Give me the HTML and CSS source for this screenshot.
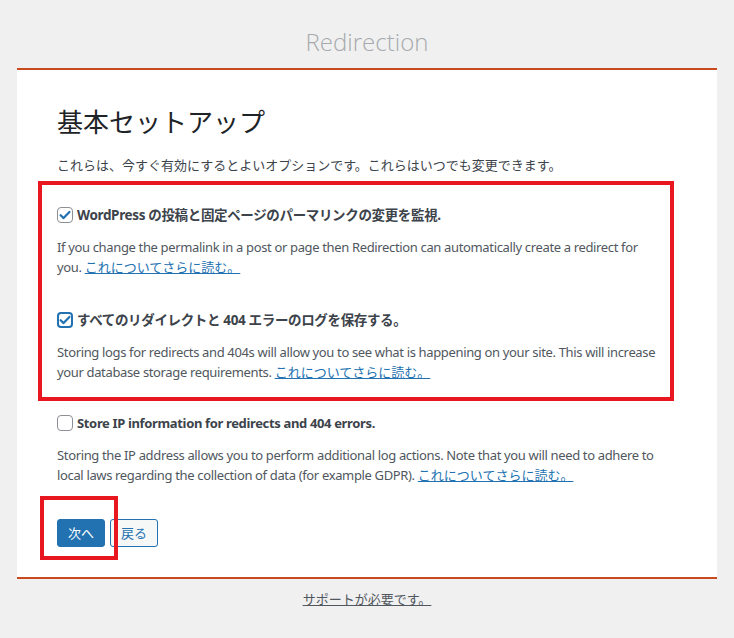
FILE: index.html
```html
<!DOCTYPE html>
<html lang="ja">
<head>
<meta charset="utf-8">
<title>Redirection</title>
<link rel="stylesheet" href="styles.css">
</head>
<body>
<h1 class="app-title">Redirection</h1>
<div class="card">
  <h2 class="setup-title">基本セットアップ</h2>
  <p class="intro">これらは、今すぐ有効にするとよいオプションです。これらはいつでも変更できます。</p>

  <div class="highlight">
    <div class="option">
      <label class="option-label">
        <span class="checkbox checked">
          <svg viewBox="0 0 16 16" width="16" height="16"><path d="M3.6 8.2l3 2.9 5.8-6.2" fill="none" stroke="#2271b1" stroke-width="2.2" stroke-linecap="round" stroke-linejoin="round"/></svg>
        </span>
        <span class="label-text">WordPress の投稿と固定ページのパーマリンクの変更を監視.</span>
      </label>
      <p class="desc">If you change the permalink in a post or page then Redirection can automatically create a redirect for you. <a href="#">これについてさらに読む。</a></p>
    </div>
    <div class="option option-second">
      <label class="option-label">
        <span class="checkbox checked focused">
          <svg viewBox="0 0 16 16" width="16" height="16"><path d="M3.6 8.2l3 2.9 5.8-6.2" fill="none" stroke="#2271b1" stroke-width="2.2" stroke-linecap="round" stroke-linejoin="round"/></svg>
        </span>
        <span class="label-text">すべてのリダイレクトと 404 エラーのログを保存する。</span>
      </label>
      <p class="desc">Storing logs for redirects and 404s will allow you to see what is happening on your site. This will increase your database storage requirements. <a href="#">これについてさらに読む。</a></p>
    </div>
  </div>

  <div class="option option-third">
    <label class="option-label">
      <span class="checkbox"></span>
      <span class="label-text label-latin">Store IP information for redirects and 404 errors.</span>
    </label>
    <p class="desc">Storing the IP address allows you to perform additional log actions. Note that you will need to adhere to local laws regarding the collection of data (for example GDPR). <a href="#">これについてさらに読む。</a></p>
  </div>

  <div class="actions">
    <button class="btn btn-primary">次へ</button>
    <button class="btn btn-secondary">戻る</button>
    <span class="mark"></span>
  </div>
</div>
<div class="footer"><a href="#">サポートが必要です。</a></div>
</body>
</html>
```
FILE: styles.css
```css
* { box-sizing: border-box; }
body {
  margin: 0;
  background: #f0f0f1;
  font-family: "Noto Sans", "Noto Sans CJK JP", sans-serif;
  color: #3c434a;
  font-size: 13px;
}
.app-title {
  margin: 0;
  height: 68px;
  padding-top: 26px;
  text-align: center;
  font-family: "Open Sans", "Noto Sans", sans-serif;
  font-weight: 300;
  font-size: 24px;
  line-height: 32px;
  color: #a7aaad;
}
.card {
  margin: 0 17px;
  background: #fff;
  border-top: 2px solid #ca4a1f;
  border-bottom: 2px solid #ca4a1f;
  padding: 34px 40px 30px;
}
.setup-title {
  margin: 0;
  font-size: 26px;
  font-weight: 400;
  line-height: 36px;
  color: #1d2327;
}
.intro {
  margin: 15px 0 6px;
  line-height: 20px;
}
.highlight {
  margin-left: -19px;
  width: 636px;
  border: 4px solid #e8161f;
  padding: 20px 10px 15px 15px;
}
.option-label {
  display: flex;
  align-items: center;
  gap: 4px;
  font-weight: 700;
  font-size: 13.5px;
  line-height: 20px;
  color: #3c434a;
}
.label-text { letter-spacing: -0.35px; }
.label-latin { font-size: 13px; }
.checkbox {
  width: 16px;
  height: 16px;
  border: 1px solid #8c8f94;
  border-radius: 4px;
  background: #fff;
  display: inline-flex;
  align-items: center;
  justify-content: center;
  flex: none;
}
.checkbox svg { display: block; flex: none; }
.checkbox.focused {
  border: 2px solid #2271b1;
}
.desc {
  margin: 13px 0 0;
  line-height: 19.5px;
  color: #50575e;
  letter-spacing: -0.35px;
}
.desc a { color: #2271b1; letter-spacing: 0; }
.option-second { margin-top: 33px; }
.option-third { margin-top: 12px; }
.actions {
  position: relative;
  display: flex;
  gap: 5px;
  margin-top: 34px;
}
.btn {
  height: 28px;
  padding: 0 10px;
  border-radius: 3px;
  font-family: inherit;
  font-size: 13px;
  line-height: 26px;
  border: 1px solid #2271b1;
}
.btn-primary { background: #2271b1; color: #fff; }
.btn-secondary { background: #f6f7f7; color: #2271b1; }
.mark {
  position: absolute;
  left: -17px;
  top: -23px;
  width: 78px;
  height: 64px;
  border: 4px solid #e8161f;
}
.footer {
  text-align: center;
  margin-top: 10px;
  line-height: 20px;
}
.footer a { color: #50575e; }
```
